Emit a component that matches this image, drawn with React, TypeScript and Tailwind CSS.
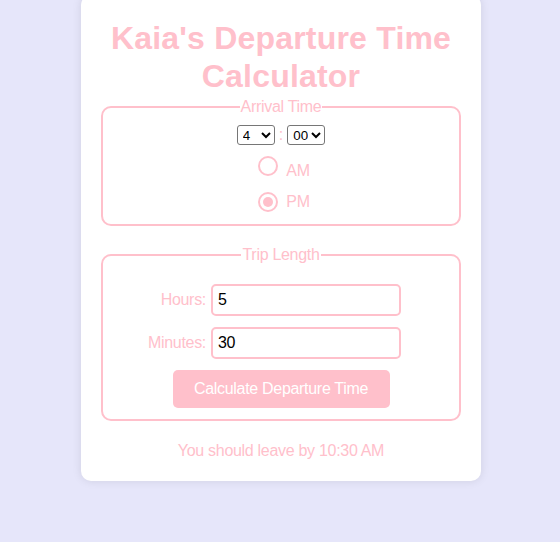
import { useState } from "react";

const hoursList = ["1", "2", "3", "4", "5", "6", "7", "8", "9", "10", "11", "12"];
const minutesList = ["00", "15", "30", "45"];

function Radio({ checked, label, onClick }: { checked: boolean; label: string; onClick: () => void }) {
  return (
    <label className="flex items-baseline justify-center gap-[8px] pl-[6px] cursor-pointer" onClick={onClick}>
      <span className="w-[20px] h-[20px] rounded-full border-2 border-[#ffc0cb] bg-white flex items-center justify-center">
        {checked && <span className="w-[10px] h-[10px] rounded-full bg-[#ffc0cb]"></span>}
      </span>
      <span className="leading-[18.4px]">{label}</span>
    </label>
  );
}

export default function App() {
  const [hour, setHour] = useState("4");
  const [minute, setMinute] = useState("00");
  const [period, setPeriod] = useState("PM");
  const [tripHours, setTripHours] = useState("5");
  const [tripMinutes, setTripMinutes] = useState("30");
  const [result, setResult] = useState("You should leave by 10:30 AM");

  // Work out the departure time from arrival minus trip length
  function calculate() {
    let h = Number(hour) % 12;
    if (period === "PM") h += 12;
    let total = h * 60 + Number(minute) - (Number(tripHours) * 60 + Number(tripMinutes));
    total = ((total % 1440) + 1440) % 1440;
    const hh = Math.floor(total / 60);
    const mm = total % 60;
    const p = hh >= 12 ? "PM" : "AM";
    const h12 = hh % 12 === 0 ? 12 : hh % 12;
    setResult(`You should leave by ${h12}:${String(mm).padStart(2, "0")} ${p}`);
  }

  return (
    <div className="min-h-screen bg-[#e6e6fa] flex justify-center font-['Liberation_Sans',Arial,sans-serif] text-[16px] tracking-[-0.3px] text-[#ffc0cb]">
      <div className="w-[400px] ml-[2px] mt-[-5px] self-start bg-white rounded-[10px] shadow-[0_0_10px_rgba(0,0,0,0.1)] px-[20px] pt-[24px] pb-[21px] text-center">
        <h1 className="text-[32px] font-bold leading-[1.2] tracking-[0.2px]">Kaia's Departure Time Calculator</h1>

        {/* Arrival time */}
        <fieldset className="mt-[2px] border-2 border-[#ffc0cb] rounded-[10px] pb-[12px]">
          <legend className="mx-auto px-[1px] leading-[18.4px]">Arrival Time</legend>
          <div className="flex flex-col gap-[11px] pt-[9px]">
            <div className="flex justify-center items-center h-[20px] tracking-normal">
              <select
                value={hour}
                onChange={(e) => setHour(e.target.value)}
                className="w-[38px] h-[20px] bg-white text-black border border-[#767676] rounded-[3px] text-[13.33px] pl-[1px]"
              >
                {hoursList.map((h) => (
                  <option key={h} value={h}>
                    {h}
                  </option>
                ))}
              </select>
              <span className="px-[4px]">:</span>
              <select
                value={minute}
                onChange={(e) => setMinute(e.target.value)}
                className="w-[38px] h-[20px] bg-white text-black border border-[#767676] rounded-[3px] text-[13.33px] pl-[1px]"
              >
                {minutesList.map((m) => (
                  <option key={m} value={m}>
                    {m}
                  </option>
                ))}
              </select>
            </div>
            <Radio checked={period === "AM"} label="AM" onClick={() => setPeriod("AM")} />
            <Radio checked={period === "PM"} label="PM" onClick={() => setPeriod("PM")} />
          </div>
        </fieldset>

        {/* Trip length */}
        <fieldset className="mt-[20px] border-2 border-[#ffc0cb] rounded-[10px] pb-[11px]">
          <legend className="mx-auto px-[1px] leading-[18.4px]">Trip Length</legend>
          <div className="flex flex-col gap-[11px] pt-[20px]">
            <div className="flex items-center pl-[3px]">
              <label className="w-[100px] text-right mr-[5px]">Hours:</label>
              <input
                value={tripHours}
                onChange={(e) => setTripHours(e.target.value)}
                className="w-[190px] h-[32px] border-2 border-[#ffc0cb] rounded-[5px] px-[5px] text-black bg-white"
              />
            </div>
            <div className="flex items-center pl-[3px]">
              <label className="w-[100px] text-right mr-[5px]">Minutes:</label>
              <input
                value={tripMinutes}
                onChange={(e) => setTripMinutes(e.target.value)}
                className="w-[190px] h-[32px] border-2 border-[#ffc0cb] rounded-[5px] px-[5px] text-black bg-white"
              />
            </div>
            <div className="flex justify-center">
              <button
                onClick={calculate}
                className="h-[38px] w-[217px] bg-[#ffc0cb] text-white rounded-[5px]"
              >
                Calculate Departure Time
              </button>
            </div>
          </div>
        </fieldset>

        <p className="mt-[21px] leading-[18.4px]">{result}</p>
      </div>
    </div>
  );
}
